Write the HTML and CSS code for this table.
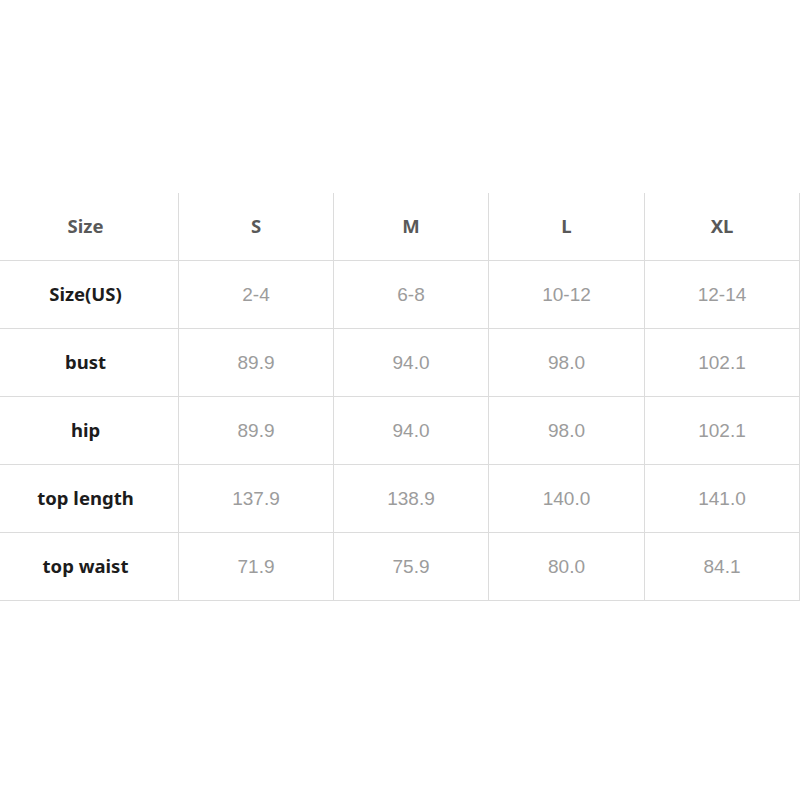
FILE: index.html
```html
<!DOCTYPE html>
<html>
<head>
<meta charset="utf-8">
<link rel="stylesheet" href="styles.css">
</head>
<body>
<div class="sheet">
  <div class="chart">
    <div class="cell head first">Size</div>
    <div class="cell head">S</div>
    <div class="cell head">M</div>
    <div class="cell head">L</div>
    <div class="cell head">XL</div>

    <div class="cell label first">Size(US)</div>
    <div class="cell val">2-4</div>
    <div class="cell val">6-8</div>
    <div class="cell val">10-12</div>
    <div class="cell val">12-14</div>

    <div class="cell label first">bust</div>
    <div class="cell val">89.9</div>
    <div class="cell val">94.0</div>
    <div class="cell val">98.0</div>
    <div class="cell val">102.1</div>

    <div class="cell label first">hip</div>
    <div class="cell val">89.9</div>
    <div class="cell val">94.0</div>
    <div class="cell val">98.0</div>
    <div class="cell val">102.1</div>

    <div class="cell label first">top length</div>
    <div class="cell val">137.9</div>
    <div class="cell val">138.9</div>
    <div class="cell val">140.0</div>
    <div class="cell val">141.0</div>

    <div class="cell label first">top waist</div>
    <div class="cell val">71.9</div>
    <div class="cell val">75.9</div>
    <div class="cell val">80.0</div>
    <div class="cell val">84.1</div>
  </div>
</div>
</body>
</html>
```
FILE: styles.css
```css
html, body {
  margin: 0;
  padding: 0;
  background: #ffffff;
}

.sheet {
  width: 800px;
  height: 800px;
  padding-top: 193px;
  box-sizing: border-box;
}

.chart {
  display: grid;
  grid-template-columns: 179px 155px 155px 156px 155px;
  grid-auto-rows: 68px;
}

.cell {
  display: flex;
  align-items: center;
  justify-content: center;
  border-right: 1px solid #dcdcdc;
  border-bottom: 1px solid #dcdcdc;
  box-sizing: border-box;
  padding-top: 1px;
}

.head {
  font-family: "Noto Sans", "Open Sans", sans-serif;
  font-weight: 700;
  font-size: 18.5px;
  color: #595959;
  padding-top: 0;
  padding-bottom: 3px;
}

.label {
  font-family: "Noto Sans", "Open Sans", sans-serif;
  font-weight: 700;
  font-size: 18.5px;
  color: #1c1c1c;
  padding-top: 0;
  padding-bottom: 2px;
}

.first {
  padding-right: 7px;
}

.val {
  font-family: "Liberation Sans", Arial, sans-serif;
  font-size: 19px;
  color: #9c9c9c;
}
```
